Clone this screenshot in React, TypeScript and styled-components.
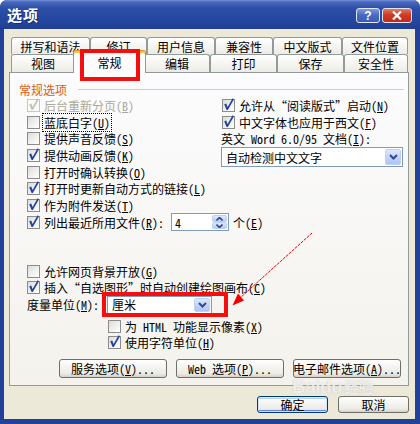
import React from 'react';
import styled, { createGlobalStyle, css } from 'styled-components';

const Global = createGlobalStyle`
  html, body { margin: 0; padding: 0; background: #fff; }
  body { font-family: "Noto Sans Mono CJK SC", "Noto Sans CJK SC", sans-serif; font-size: 12px; }
`;

const FONT = `"Noto Sans Mono CJK SC", "Noto Sans CJK SC", sans-serif`;

const Window = styled.div`
  position: relative;
  width: 420px;
  height: 424px;
  display: flex;
  flex-direction: column;
  background: #21419a;
  border-radius: 7px 7px 0 0;
  overflow: hidden;
  font-family: ${FONT};
  font-size: 12px;
  color: #000;
`;

const TitleBar = styled.div`
  flex: none;
  height: 29px;
  display: flex;
  align-items: center;
  padding: 0 8px 0 7px;
  box-sizing: border-box;
  background: linear-gradient(180deg, #7391d8 0%, #4868bc 7%, #2d4fa6 28%, #2748a0 60%, #23439a 85%, #1f3e90 100%);
`;

const Title = styled.div`
  flex: 1;
  color: #fff;
  font-family: "Noto Sans CJK SC", sans-serif;
  font-weight: bold;
  font-size: 15px;
  letter-spacing: 1px;
  text-shadow: 1px 1px 0 #142c6e;
  margin-top: -1px;
`;

const CaptionBtn = styled.div<{ $kind: 'help' | 'close' }>`
  box-sizing: border-box;
  width: ${p => (p.$kind === 'close' ? 30 : 24)}px;
  height: 15px;
  margin-top: 2px;
  margin-left: ${p => (p.$kind === 'close' ? 2 : 0)}px;
  border: 1px solid #dfe6f6;
  border-radius: 3px;
  display: flex;
  align-items: center;
  justify-content: center;
  color: #fff;
  font-family: "Liberation Sans", sans-serif;
  font-weight: bold;
  font-size: 12px;
  background: ${p =>
    p.$kind === 'close'
      ? 'linear-gradient(180deg, #e07a62 0%, #cf3b24 45%, #c22a18 100%)'
      : 'linear-gradient(180deg, #7e9ae0 0%, #4a6bc4 45%, #3a5bb6 100%)'};
`;

const Client = styled.div`
  flex: 1;
  margin: 0 5px 5px 4px;
  padding: 8px 6px 0 5px;
  background: #ece9d8;
  display: flex;
  flex-direction: column;
`;

const TabStrip = styled.div`
  margin: 0 1px 0 2px;
  display: flex;
  flex-direction: column;
`;

const TabRow = styled.div<{ $h: number }>`
  display: flex;
  height: ${p => p.$h}px;
`;

const Tab = styled.div<{ $w: number; $active?: boolean }>`
  box-sizing: border-box;
  width: ${p => p.$w}px;
  height: 100%;
  border: 1px solid #919b9c;
  border-bottom: none;
  border-radius: 3px 3px 0 0;
  background: linear-gradient(180deg, #ffffff 0%, #f4f3ee 60%, #ecebe6 100%);
  display: flex;
  align-items: center;
  justify-content: center;
  white-space: nowrap;
  ${p =>
    p.$active &&
    css`
      position: relative;
      z-index: 2;
      width: ${p.$w + 4}px;
      margin: -4px -2px -1px;
      height: calc(100% + 5px);
      background: #fcfcfe;
      border-top: 1px solid #e68b2c;
      box-shadow: inset 0 2px 0 #ffc83c;
      padding-top: 1px;
    `}
`;

const Panel = styled.div`
  box-sizing: border-box;
  height: 314px;
  border: 1px solid #919b9c;
  background: linear-gradient(180deg, #fcfcfe 0%, #f7f6f3 60%, #f3f2ec 100%);
  padding: 8px 4px 0 9px;
  display: flex;
  flex-direction: column;
`;

const GroupHeader = styled.div`
  height: 16px;
  display: flex;
  align-items: center;
`;

const GroupTitle = styled.span`
  color: #dd5a10;
`;

const GroupLine = styled.span`
  flex: 1;
  height: 1px;
  margin-left: 11px;
  background: #d0d0bf;
`;

const Body = styled.div`
  margin-left: 8px;
  display: flex;
  flex-direction: column;
`;

const Columns = styled.div`
  display: grid;
  grid-template-columns: 194px 182px;
  align-items: start;
`;

const Col = styled.div`
  display: flex;
  flex-direction: column;
`;

const Row = styled.div<{ $h?: number; $mt?: number; $ml?: number; $gap?: number }>`
  display: flex;
  align-items: center;
  height: ${p => p.$h ?? 16.7}px;
  margin-top: ${p => p.$mt ?? 0}px;
  margin-left: ${p => p.$ml ?? 0}px;
  gap: ${p => p.$gap ?? 4}px;
  white-space: nowrap;
`;

const Label = styled.span<{ $disabled?: boolean; $focus?: boolean; $w?: number }>`
  color: ${p => (p.$disabled ? '#aca899' : '#000')};
  ${p => p.$w && css`width: ${p.$w}px; flex: none;`}
  ${p =>
    p.$focus &&
    css`
      outline: 1px dotted #000;
      outline-offset: 0px;
      padding: 0 1px;
      margin-left: -1px;
    `}
`;

const Box = styled.span<{ $disabled?: boolean }>`
  position: relative;
  flex: none;
  box-sizing: border-box;
  width: 13px;
  height: 13px;
  border: 1px solid ${p => (p.$disabled ? '#c9c7ba' : '#8c8c8c')};
  background: ${p => (p.$disabled ? '#fbfbf8' : 'linear-gradient(135deg, #dcdcd7 0%, #f2f2ef 60%, #ffffff 100%)')};
  svg {
    position: absolute;
    left: -1px;
    top: -1px;
    overflow: visible;
  }
`;

const Check: React.FC<{ checked?: boolean; disabled?: boolean }> = ({ checked, disabled }) => (
  <Box $disabled={disabled}>
    {checked && (
      <svg width="13" height="13" viewBox="0 0 13 13">
        <path
          d="M2.2 5.2 L4.2 4.6 L5.6 8 L10.6 -0.8 L12 0.2 L5.8 11 L4.6 11 Z"
          fill={disabled ? '#c4c2b6' : '#2343a4'}
        />
      </svg>
    )}
  </Box>
);

const Combo = styled.div<{ $w: number; $h: number }>`
  box-sizing: border-box;
  width: ${p => p.$w}px;
  height: ${p => p.$h}px;
  border: 1px solid #7f9db9;
  background: #fff;
  display: flex;
  align-items: center;
  padding: 1px 1px 1px 4px;
  flex: none;
`;

const ComboText = styled.span`
  flex: 1;
  white-space: nowrap;
`;

const DropBtn = styled.span`
  box-sizing: border-box;
  width: 16px;
  height: 100%;
  border: 1px solid #c0d1f7;
  border-radius: 2px;
  background: linear-gradient(180deg, #dfe8fd 0%, #c3d4fa 50%, #adc4f5 100%);
  display: flex;
  align-items: center;
  justify-content: center;
`;

const Chevron = () => (
  <svg width="9" height="6" viewBox="0 0 9 6">
    <path d="M1 1 L4.5 4.5 L8 1" fill="none" stroke="#33488a" strokeWidth="2" />
  </svg>
);

const Spinner = styled.div`
  box-sizing: border-box;
  width: 58px;
  height: 18px;
  margin-left: 3px;
  border: 1px solid #7f9db9;
  background: #fff;
  display: flex;
  align-items: stretch;
  padding: 1px;
  flex: none;
`;

const SpinValue = styled.span`
  flex: 1;
  padding-left: 2px;
  display: flex;
  align-items: center;
`;

const SpinBtns = styled.span`
  width: 15px;
  display: flex;
  flex-direction: column;
`;

const SpinBtn = styled.span`
  flex: 1;
  box-sizing: border-box;
  border: 1px solid #c0d1f7;
  border-radius: 2px;
  background: linear-gradient(180deg, #dfe8fd 0%, #b7cbf7 100%);
  display: flex;
  align-items: center;
  justify-content: center;
`;

const ButtonRow = styled.div`
  display: flex;
  gap: 9px;
  margin: 8px 0 0 32px;
`;

const Btn = styled.div<{ $w: number; $h: number; $default?: boolean }>`
  box-sizing: border-box;
  width: ${p => p.$w}px;
  height: ${p => p.$h}px;
  border: 1px solid ${p => (p.$default ? '#003c74' : '#6f6f6a')};
  border-radius: 3px;
  background: linear-gradient(180deg, #ffffff 0%, #f3f3ef 45%, #ecebe6 80%, #d6d0c5 100%);
  display: flex;
  align-items: center;
  justify-content: center;
  white-space: nowrap;
  ${p =>
    p.$default &&
    css`
      box-shadow: inset 0 0 0 1px #cee7ff, inset 0 -2px 0 #6982ee, inset 0 2px 0 #bcd4f6;
    `}
`;

const Footer = styled.div`
  display: flex;
  justify-content: flex-end;
  gap: 10px;
  margin-top: 10px;
`;

const Overlay = styled.svg`
  position: absolute;
  left: 0;
  top: 0;
  pointer-events: none;
  z-index: 5;
`;

const RedBox = styled.div<{ $x: number; $y: number; $w: number; $h: number }>`
  position: absolute;
  left: ${p => p.$x}px;
  top: ${p => p.$y}px;
  width: ${p => p.$w}px;
  height: ${p => p.$h}px;
  box-sizing: border-box;
  border: 4px solid #f60d0d;
  z-index: 6;
  pointer-events: none;
`;

const Watermark = styled.div`
  position: absolute;
  left: 292px;
  top: 377px;
  z-index: 4;
  pointer-events: none;
  color: rgba(255, 255, 255, 0.75);
  text-shadow: 0 0 1px rgba(140, 140, 140, 0.55);
  font-family: "Liberation Sans", sans-serif;
  font-weight: bold;
  font-size: 19px;
  line-height: 20px;
  letter-spacing: -0.5px;
  span { font-family: "Noto Sans CJK SC", sans-serif; font-size: 15px; margin-left: 2px; }
`;

const row1 = [
  ['拼写和语法', 79],
  ['修订', 57],
  ['用户信息', 68],
  ['兼容性', 58],
  ['中文版式', 69],
  ['文件位置', 66],
] as const;

const row2 = [
  ['视图', 64],
  ['常规', 69],
  ['编辑', 66],
  ['打印', 67],
  ['保存', 67],
  ['安全性', 64],
] as const;

const M: React.FC<{ k: string }> = ({ k }) => (
  <>
    (<u>{k}</u>)
  </>
);

export default function App() {
  return (
    <>
      <Global />
      <Window>
        <TitleBar>
          <Title>选项</Title>
          <CaptionBtn $kind="help">?</CaptionBtn>
          <CaptionBtn $kind="close">
            <svg width="10" height="9" viewBox="0 0 10 9">
              <path d="M1 0.5 L9 8.5 M9 0.5 L1 8.5" stroke="#fff" strokeWidth="2.2" />
            </svg>
          </CaptionBtn>
        </TitleBar>
        <Client>
          <TabStrip>
            <TabRow $h={17}>
              {row1.map(([t, w]) => (
                <Tab key={t} $w={w}>
                  {t}
                </Tab>
              ))}
            </TabRow>
            <TabRow $h={18}>
              {row2.map(([t, w]) => (
                <Tab key={t} $w={w} $active={t === '常规'}>
                  {t}
                </Tab>
              ))}
            </TabRow>
          </TabStrip>
          <Panel>
            <GroupHeader>
              <GroupTitle>常规选项</GroupTitle>
              <GroupLine />
            </GroupHeader>
            <Body>
              <Columns>
                <Col>
                  <Row>
                    <Check checked disabled />
                    <Label $disabled>
                      后台重新分页<M k="B" />
                    </Label>
                  </Row>
                  <Row>
                    <Check />
                    <Label $focus>
                      蓝底白字<M k="U" />
                    </Label>
                  </Row>
                  <Row>
                    <Check />
                    <Label>
                      提供声音反馈<M k="S" />
                    </Label>
                  </Row>
                  <Row>
                    <Check checked />
                    <Label>
                      提供动画反馈<M k="K" />
                    </Label>
                  </Row>
                  <Row>
                    <Check />
                    <Label>
                      打开时确认转换<M k="O" />
                    </Label>
                  </Row>
                  <Row>
                    <Check checked />
                    <Label>
                      打开时更新自动方式的链接<M k="L" />
                    </Label>
                  </Row>
                  <Row>
                    <Check checked />
                    <Label>
                      作为附件发送<M k="T" />
                    </Label>
                  </Row>
                </Col>
                <Col>
                  <Row $ml={1}>
                    <Check checked />
                    <Label>
                      允许从“阅读版式”启动<M k="N" />
                    </Label>
                  </Row>
                  <Row $ml={1}>
                    <Check checked />
                    <Label>
                      中文字体也应用于西文<M k="F" />
                    </Label>
                  </Row>
                  <Row>
                    <Label>
                      英文 Word 6.0/95 文档<M k="I" />:
                    </Label>
                  </Row>
                  <Combo $w={182} $h={20}>
                    <ComboText>自动检测中文文字</ComboText>
                    <DropBtn>
                      <Chevron />
                    </DropBtn>
                  </Combo>
                </Col>
              </Columns>
              <Row>
                <Check checked />
                <Label>
                  列出最近所用文件<M k="R" />:
                </Label>
                <Spinner>
                  <SpinValue>4</SpinValue>
                  <SpinBtns>
                    <SpinBtn>
                      <svg width="7" height="4" viewBox="0 0 7 4">
                        <path d="M0.5 3.5 L3.5 0.5 L6.5 3.5" fill="none" stroke="#33488a" strokeWidth="1.6" />
                      </svg>
                    </SpinBtn>
                    <SpinBtn>
                      <svg width="7" height="4" viewBox="0 0 7 4">
                        <path d="M0.5 0.5 L3.5 3.5 L6.5 0.5" fill="none" stroke="#33488a" strokeWidth="1.6" />
                      </svg>
                    </SpinBtn>
                  </SpinBtns>
                </Spinner>
                <Label>
                  个<M k="E" />
                </Label>
              </Row>
              <Row $h={16} $mt={33.1}>
                <Check />
                <Label>
                  允许网页背景开放<M k="G" />
                </Label>
              </Row>
              <Row $h={16}>
                <Check checked />
                <Label>
                  插入“自选图形”时自动创建绘图画布<M k="C" />
                </Label>
              </Row>
              <Row $h={18} $gap={0}>
                <Label $w={80}>
                  度量单位<M k="M" />:
                </Label>
                <Combo $w={105} $h={18}>
                  <ComboText>厘米</ComboText>
                  <DropBtn>
                    <Chevron />
                  </DropBtn>
                </Combo>
              </Row>
              <Row $h={16} $mt={5} $ml={81}>
                <Check />
                <Label>
                  为 HTML 功能显示像素<M k="X" />
                </Label>
              </Row>
              <Row $h={16} $ml={81}>
                <Check checked />
                <Label>
                  使用字符单位<M k="H" />
                </Label>
              </Row>
              <ButtonRow>
                <Btn $w={108} $h={19}>
                  服务选项<M k="V" />...
                </Btn>
                <Btn $w={108} $h={19}>
                  Web 选项<M k="P" />...
                </Btn>
                <Btn $w={108} $h={19}>
                  电子邮件选项<M k="A" />...
                </Btn>
              </ButtonRow>
            </Body>
          </Panel>
          <Footer>
            <Btn $w={71} $h={17} $default>
              确定
            </Btn>
            <Btn $w={71} $h={17}>
              取消
            </Btn>
          </Footer>
        </Client>
        <RedBox $x={80} $y={49} $w={60} $h={32} />
        <RedBox $x={102} $y={292} $w={126} $h={25} />
        <Overlay width="420" height="424" viewBox="0 0 420 424">
          <line x1="312" y1="233" x2="240" y2="298" stroke="#f20000" strokeWidth="1" strokeDasharray="3 1" />
          <polygon points="232.5,305.5 244,300.5 238,293.5" fill="#f20000" />
        </Overlay>
        <Watermark>
          Baidu<span>经验</span>
        </Watermark>
      </Window>
    </>
  );
}
